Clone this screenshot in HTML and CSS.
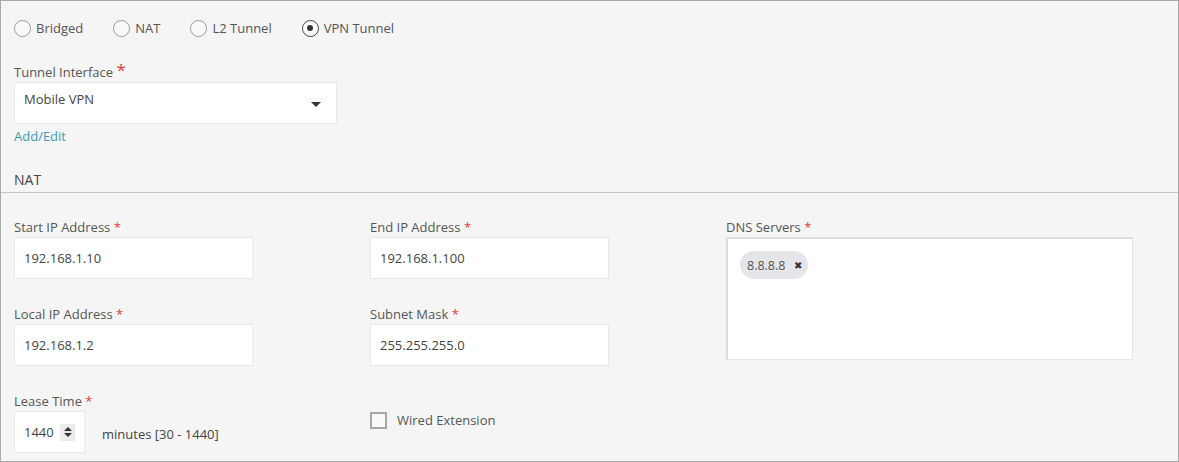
FILE: index.html
```html
<!DOCTYPE html>
<html>
<head>
<meta charset="utf-8">
<link rel="stylesheet" href="styles.css">
</head>
<body>
<div class="frame">
  <div class="top">
    <div class="radios">
      <label class="radio"><span class="circle"></span><span>Bridged</span></label>
      <label class="radio"><span class="circle"></span><span>NAT</span></label>
      <label class="radio"><span class="circle"></span><span>L2 Tunnel</span></label>
      <label class="radio"><span class="circle checked"></span><span>VPN Tunnel</span></label>
    </div>
    <div class="field tunnel">
      <div class="label">Tunnel Interface <span class="req big">*</span></div>
      <div class="select">
        <span>Mobile VPN</span>
        <span class="caret"></span>
      </div>
      <a class="link">Add/Edit</a>
    </div>
  </div>
  <div class="section-title">NAT</div>
  <div class="grid">
    <div class="col">
      <div class="field">
        <div class="label">Start IP Address <span class="req">*</span></div>
        <div class="input">192.168.1.10</div>
      </div>
      <div class="field">
        <div class="label">Local IP Address <span class="req">*</span></div>
        <div class="input">192.168.1.2</div>
      </div>
      <div class="field">
        <div class="label">Lease Time <span class="req">*</span></div>
        <div class="lease-row">
          <div class="input number">
            <span>1440</span>
            <span class="spin"><span class="up"></span><span class="down"></span></span>
          </div>
          <span class="unit">minutes [30 - 1440]</span>
        </div>
      </div>
    </div>
    <div class="col">
      <div class="field">
        <div class="label">End IP Address <span class="req">*</span></div>
        <div class="input">192.168.1.100</div>
      </div>
      <div class="field">
        <div class="label">Subnet Mask <span class="req">*</span></div>
        <div class="input">255.255.255.0</div>
      </div>
      <div class="field check-field">
        <label class="check"><span class="box"></span><span>Wired Extension</span></label>
      </div>
    </div>
    <div class="col">
      <div class="field">
        <div class="label">DNS Servers <span class="req">*</span></div>
        <div class="tags">
          <span class="chip">8.8.8.8 <span class="x">&#x2716;</span></span>
        </div>
      </div>
    </div>
  </div>
</div>
</body>
</html>
```

FILE: styles.css
```css
* { box-sizing: border-box; }
html, body { margin: 0; padding: 0; }
body {
  font-family: "Open Sans", "Noto Sans", sans-serif;
  font-size: 13px;
  color: #555;
  background: #fff;
}
.frame {
  width: 1179px;
  height: 462px;
  border: 1px solid #a9a9a9;
  background: #f5f5f5;
  overflow: hidden;
}
.top {
  padding: 18px 13px 0 13px;
}
.radios {
  display: flex;
  gap: 30px;
  height: 18px;
  align-items: center;
}
.radio {
  display: flex;
  align-items: center;
  gap: 5px;
  line-height: 18px;
  color: #555;
}
.circle {
  width: 17px;
  height: 17px;
  border: 1.5px solid #9a9a9a;
  border-radius: 50%;
  background: #fafafa;
  display: inline-block;
  position: relative;
}
.circle.checked {
  border-color: #444;
}
.circle.checked::after {
  content: "";
  position: absolute;
  left: 4px;
  top: 4px;
  width: 6px;
  height: 6px;
  border-radius: 50%;
  background: #333;
}
.tunnel {
  margin-top: 26px;
}
.label {
  line-height: 18px;
  height: 18px;
  color: #555;
  margin-bottom: 1px;
}
.req {
  color: #e53935;
  font-size: 13px;
}
.req.big {
  font-size: 17px;
  line-height: 10px;
  position: relative;
  top: -1px;
}
.select {
  width: 323px;
  height: 42px;
  background: #fff;
  border: 1px solid #e8e8e8;
  padding: 7px 9px 0 9px;
  display: flex;
  justify-content: space-between;
  align-items: flex-start;
  line-height: 18px;
  color: #444;
}
.caret {
  width: 0;
  height: 0;
  border-left: 5px solid transparent;
  border-right: 5px solid transparent;
  border-top: 5px solid #333;
  margin-top: 12px;
  margin-right: 6px;
}
.link {
  display: block;
  margin-top: 3px;
  line-height: 18px;
  color: #3a9cb2;
  cursor: pointer;
}
.section-title {
  margin-top: 25px;
  padding: 0 13px 2px 13px;
  font-size: 14px;
  line-height: 20px;
  color: #444;
  border-bottom: 1px solid #c6c6c6;
}
.grid {
  display: grid;
  grid-template-columns: 356px 356px 420px;
  padding: 25px 13px 0 13px;
}
.col {
  display: flex;
  flex-direction: column;
  gap: 26px;
}
.input {
  width: 239px;
  height: 42px;
  background: #fff;
  border: 1px solid #e8e8e8;
  padding: 0 9px;
  display: flex;
  align-items: center;
  color: #444;
}
.lease-row {
  display: flex;
  align-items: center;
  gap: 17px;
}
.input.number {
  width: 71px;
  justify-content: space-between;
  padding: 0 9px 0 9px;
}
.spin {
  width: 15px;
  height: 17px;
  background: #ececec;
  display: flex;
  flex-direction: column;
  align-items: center;
  justify-content: center;
  gap: 2px;
}
.spin .up {
  width: 0; height: 0;
  border-left: 4px solid transparent;
  border-right: 4px solid transparent;
  border-bottom: 4px solid #333;
}
.spin .down {
  width: 0; height: 0;
  border-left: 4px solid transparent;
  border-right: 4px solid transparent;
  border-top: 4px solid #333;
}
.unit {
  margin-top: 4px;
  color: #444;
}
.check-field {
  padding-top: 19px;
}
.check {
  display: flex;
  align-items: center;
  gap: 10px;
  line-height: 18px;
  color: #555;
}
.box {
  width: 17px;
  height: 17px;
  border: 2px solid #a8a8a8;
  background: #fafafa;
  display: inline-block;
}
.tags {
  width: 407px;
  height: 123px;
  background: #fff;
  border: 1px solid #e6e6e6;
  border-top: 2px solid #dcdcdc;
  border-left: 2px solid #dcdcdc;
  padding: 12px 12px;
}
.chip {
  display: inline-flex;
  align-items: center;
  gap: 9px;
  height: 28px;
  padding: 0 6px 0 7px;
  border-radius: 14px;
  background: #e6e6ea;
  color: #555;
  font-size: 12.5px;
}
.chip .x {
  font-size: 10px;
  color: #333;
}
```
